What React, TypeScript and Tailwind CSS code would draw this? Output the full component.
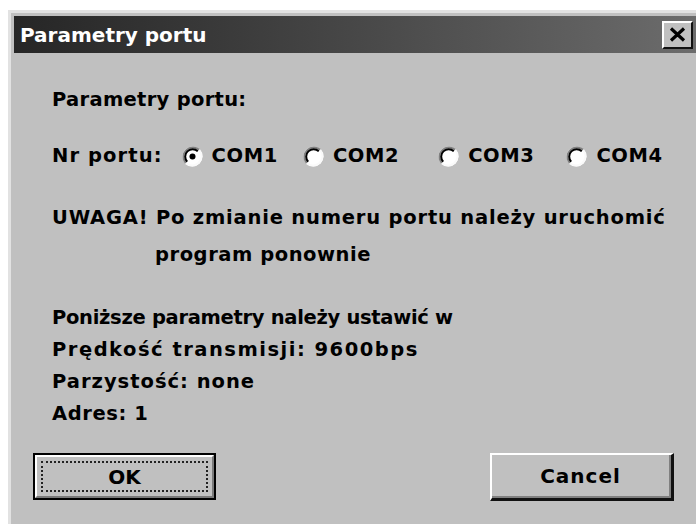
import type { ReactNode } from "react";

const ports = [
	{ label: "COM1", gap: "", checked: true },
	{ label: "COM2", gap: "ml-[25px]", checked: false },
	{ label: "COM3", gap: "ml-[39px]", checked: false },
	{ label: "COM4", gap: "ml-[32px]", checked: false },
];

function Radio({ checked }: { checked: boolean }) {
	return (
		<svg viewBox="0 0 21 21" className="h-[21px] w-[21px] shrink-0" aria-hidden>
			<circle cx="10.5" cy="10.5" r="10" fill="#ffffff" />
			{/* sunken rim: dark on the upper left, light on the lower right */}
			<path
				d="M3.8 17.2 A9.5 9.5 0 0 1 17.2 3.8"
				fill="none"
				stroke="#808080"
				strokeWidth="2"
			/>
			<path
				d="M5.2 15.8 A7.5 7.5 0 0 1 15.8 5.2"
				fill="none"
				stroke="#000000"
				strokeWidth="2"
			/>
			<path
				d="M17.2 3.8 A9.5 9.5 0 0 1 3.8 17.2"
				fill="none"
				stroke="#fafafa"
				strokeWidth="2"
			/>
			{checked ? <circle cx="10.5" cy="10.5" r="3" fill="#000000" /> : null}
		</svg>
	);
}

function Button({
	children,
	focused = false,
}: {
	children: ReactNode;
	focused?: boolean;
}) {
	if (focused) {
		return (
			<div className="h-[47px] w-[183px] border-2 border-black">
				<div className="h-full w-full border-2 border-t-white border-l-white border-r-[#7a7a7a] border-b-[#7a7a7a] p-[4px]">
					<div className="flex h-full w-full items-center justify-center border-2 border-dotted border-[#222]">
						<span className="text-[20px] leading-none">{children}</span>
					</div>
				</div>
			</div>
		);
	}
	return (
		<div className="h-[48px] w-[184px] border-t-2 border-l-2 border-r-[3px] border-b-[3px] border-t-white border-l-white border-r-[#111] border-b-[#111]">
			<div className="flex h-full w-full items-center justify-center border-r-2 border-b-2 border-[#808080]">
				<span className="text-[20px] leading-none tracking-[1px]">{children}</span>
			</div>
		</div>
	);
}

export default function App() {
	return (
		<div className="h-[524px] w-[696px] overflow-hidden bg-white pl-[8px] pt-[10px] font-['DejaVu_Sans',Verdana,sans-serif] font-bold text-black">
			<div className="flex h-full flex-col border-t-[3px] border-l-[3px] border-[#e2e2e2] bg-[#c0c0c0] pl-[3px] pt-[3px]">
				<div className="flex h-[37px] items-center justify-between bg-gradient-to-r from-[#262626] to-[#6c6c6c] pl-[6px] pr-[3px]">
					<span className="text-[20px] text-white">Parametry portu</span>
					<div className="flex h-[28px] w-[31px] items-center justify-center border-2 border-t-white border-l-white border-r-[#111] border-b-[#111] bg-[#c0c0c0]">
						<svg width="17" height="15" viewBox="0 0 17 15" aria-hidden>
							<path d="M2 1.5 L15 13.5 M15 1.5 L2 13.5" stroke="#000" strokeWidth="3.2" />
						</svg>
					</div>
				</div>

				<div className="flex flex-1 flex-col pl-[38px] pr-[10px] text-[19.5px]">
					<p className="mt-[31px] leading-[32px] tracking-[0.3px]">Parametry portu:</p>

					<div className="mt-[24px] flex h-[32px] items-center">
						<span className="tracking-[1.1px]">Nr portu:</span>
						<div className="ml-[19px] flex items-center">
							{ports.map((port) => (
								<label key={port.label} className={`flex items-center ${port.gap}`}>
									<Radio checked={port.checked} />
									<span className="ml-[9px] tracking-[0.6px]">{port.label}</span>
								</label>
							))}
						</div>
					</div>

					<div className="mt-[27px] leading-[37px]">
						<p className="whitespace-nowrap tracking-[0.8px]">
							UWAGA! Po zmianie numeru portu należy uruchomić
						</p>
						<p className="pl-[103px] tracking-[0.55px]">program ponownie</p>
					</div>

					<div className="mt-[29px] leading-[32px]">
						<p className="tracking-[-0.3px]">Poniższe parametry należy ustawić w</p>
						<p className="tracking-[1.5px]">Prędkość transmisji: 9600bps</p>
						<p className="tracking-[1px]">Parzystość: none</p>
						<p className="tracking-[0.6px]">Adres: 1</p>
					</div>

					<div className="mt-[23px] flex items-start justify-between pr-[10px]">
						<div className="-ml-[19px]">
							<Button focused>OK</Button>
						</div>
						<div className="mr-[2px]">
							<Button>Cancel</Button>
						</div>
					</div>
				</div>
			</div>
		</div>
	);
}
